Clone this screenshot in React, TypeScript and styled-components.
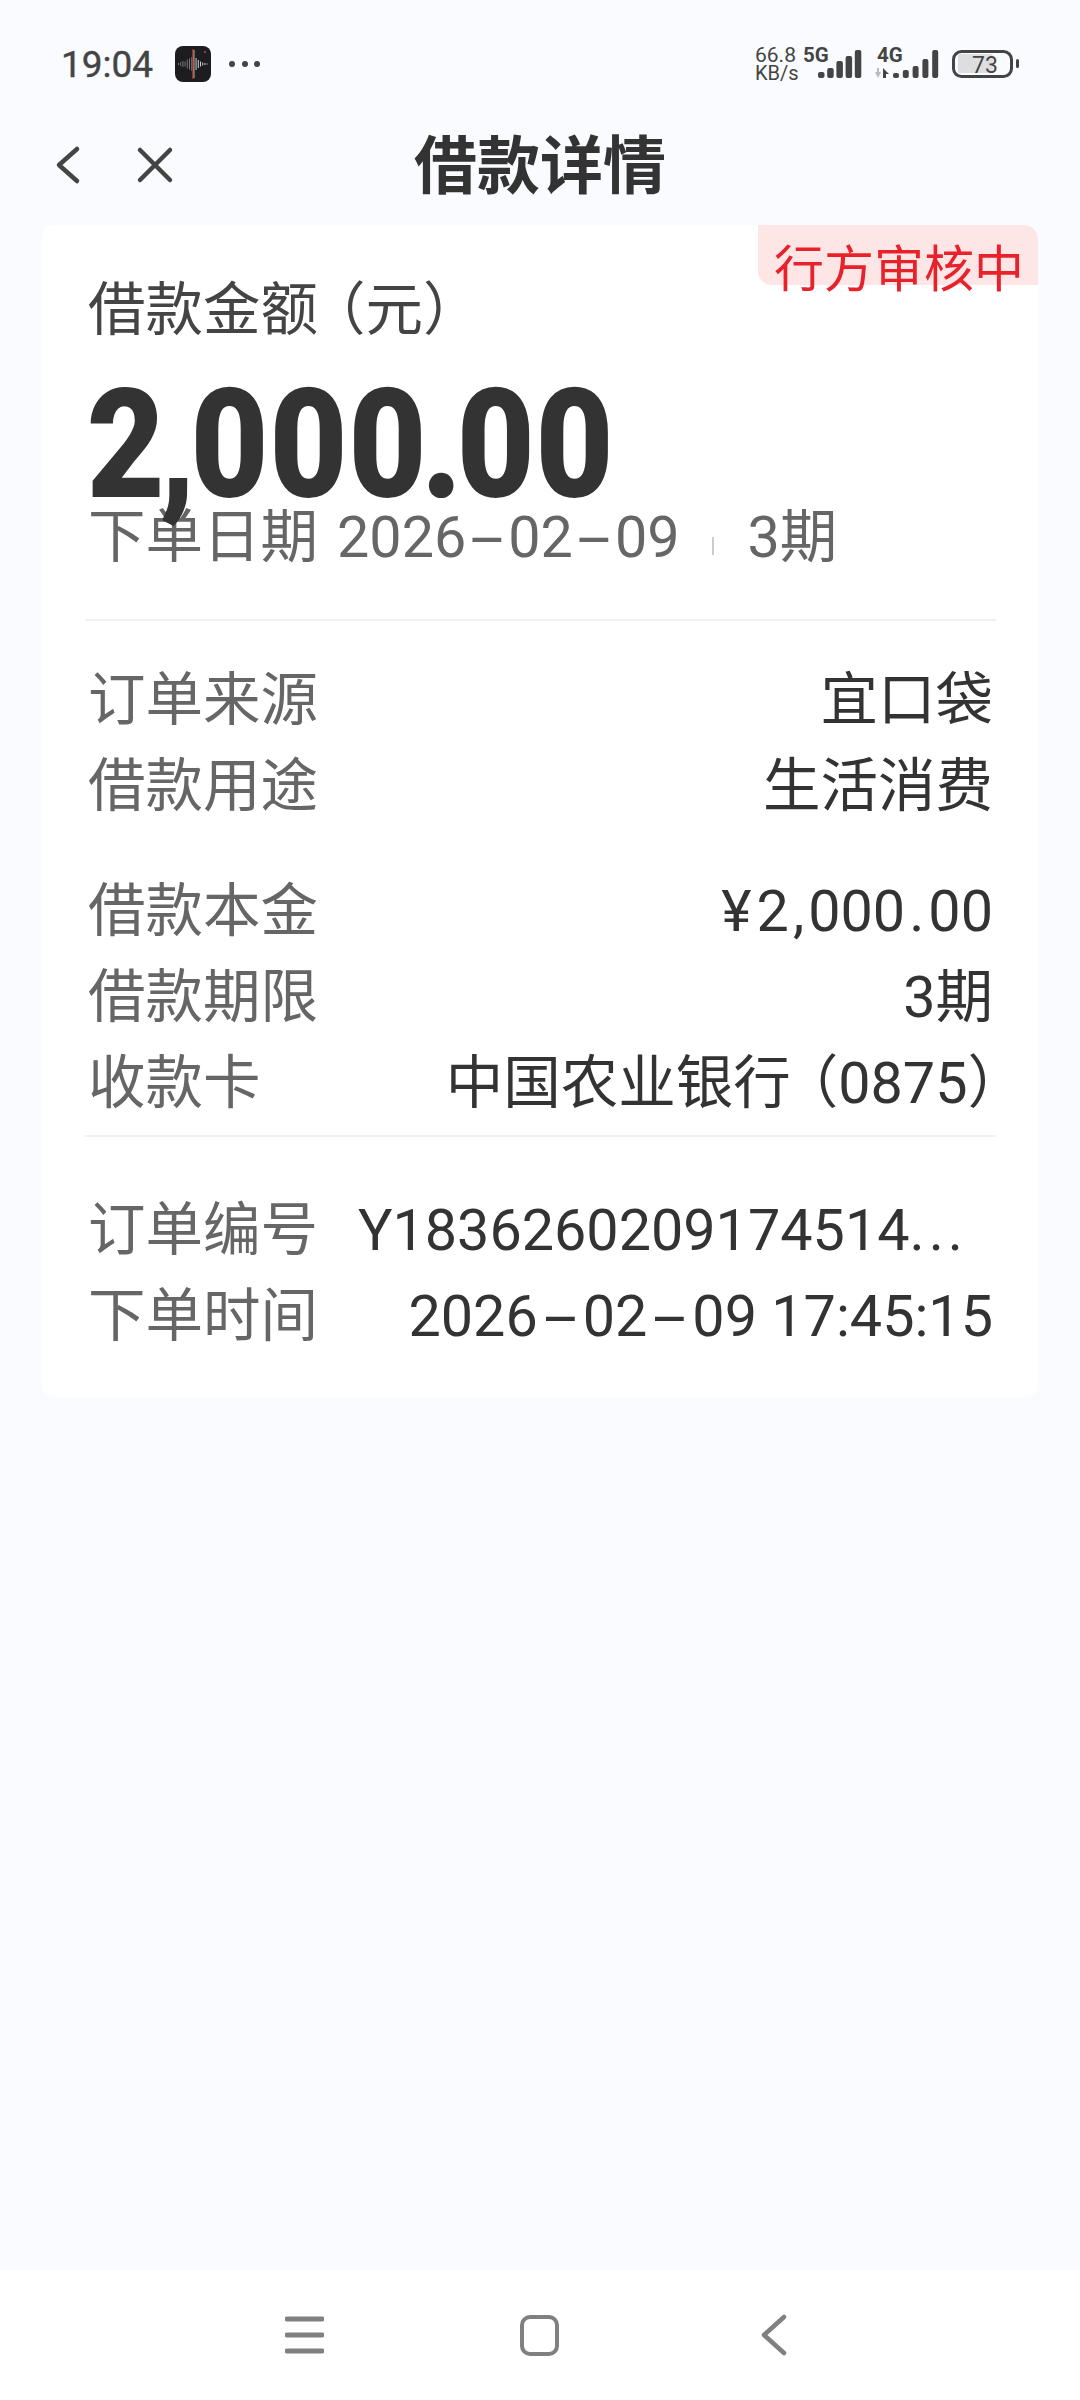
import styled, { createGlobalStyle } from "styled-components";

const GlobalStyle = createGlobalStyle`
  html, body {
    margin: 0;
    padding: 0;
    background: #fafbff;
  }
  * {
    box-sizing: border-box;
  }
`;

const FONT = `Roboto, "Noto Sans CJK SC", sans-serif`;

const Page = styled.div`
  width: 1080px;
  height: 2400px;
  display: flex;
  flex-direction: column;
  background: #fafbff;
  font-family: ${FONT};
  overflow: hidden;
`;

const StatusBar = styled.div`
  height: 124px;
  padding: 4px 62px 0 61px;
  display: flex;
  align-items: center;
  justify-content: space-between;
  color: #444;
`;

const StatusLeft = styled.div`
  display: flex;
  align-items: center;
`;

const Time = styled.span`
  width: 114px;
  font-size: 37px;
  font-weight: 400;
  -webkit-text-stroke: 0.4px #444;
`;

const AppIcon = styled.div`
  width: 36px;
  height: 36px;
  margin-right: 17px;
  svg {
    display: block;
  }
`;

const StatusRight = styled.div`
  width: 265px;
  margin: -4px -2px 0 0;
  svg {
    display: block;
  }
`;

const NavBar = styled.div`
  position: relative;
  height: 82px;
  display: flex;
  align-items: center;
  padding-left: 54px;
  gap: 54px;
`;

const NavTitle = styled.h1`
  position: absolute;
  top: 2px;
  left: 0;
  right: 0;
  margin: 0;
  text-align: center;
  font-size: 63px;
  line-height: 82px;
  font-weight: 700;
  color: #333;
`;

const Card = styled.section`
  position: relative;
  margin: 19px 42px 0;
  padding: 54px 42px 38px 43px;
  background: #fff;
  border-radius: 12px;
`;

const Badge = styled.div`
  position: absolute;
  top: 0;
  right: 0;
  width: 280px;
  height: 60px;
  padding-left: 16px;
  background: #ffe6e6;
  border-radius: 0 14px 0 14px;
  color: #e8222a;
  font-size: 50px;
  line-height: 91px;
  white-space: nowrap;
`;

const AmountLabel = styled.div`
  height: 60px;
  padding-left: 3px;
  font-size: 57.5px;
  line-height: 64px;
  color: #444;
  white-space: nowrap;
`;

const Amount = styled.div`
  margin-top: 41px;
  padding-left: 2px;
  height: 124px;
  font-size: 153px;
  line-height: 130px;
  font-weight: 900;
  color: #333;
  letter-spacing: 1px;
  white-space: nowrap;
  transform: scaleX(0.88);
  transform-origin: left center;
`;

const AmountMark = styled.span`
  margin: 0 -7px;
`;

const Sub = styled.div`
  display: flex;
  align-items: center;
  padding: 6px 0 0 3px;
  height: 62px;
  font-size: 57.5px;
  line-height: 62px;
  color: #666;
  white-space: nowrap;
`;

const SubDate = styled.span`
  margin-left: 19px;
`;

const SubBar = styled.i`
  width: 2px;
  height: 18px;
  margin: 16px 34px 0 32px;
  background: #ccc;
`;

const Hy = styled.span<{ $w?: number }>`
  display: inline-block;
  width: ${(p) => p.$w ?? 45}px;
  text-align: center;
  transform: scaleX(2.1);
`;

const Divider = styled.hr<{ $top: number; $bottom: number }>`
  margin: ${(p) => p.$top}px 0 ${(p) => p.$bottom}px;
  border: 0;
  height: 2px;
  background: #f1f1f3;
`;

const Group = styled.div<{ $top?: number }>`
  margin-top: ${(p) => p.$top ?? 0}px;
  padding: 0 3px;
`;

const Row = styled.div`
  display: flex;
  justify-content: space-between;
  height: 86px;
  line-height: 88px;
  font-size: 57.5px;
  white-space: nowrap;
`;

const Label = styled.span`
  color: #666;
  flex: none;
`;

const Value = styled.span`
  color: #333;
`;

const OrderNo = styled(Value)`
  margin-right: 26px;
`;

const Ellip = styled.span`
  letter-spacing: 4px;
`;

const Sep = styled.span`
  margin: 0 4px;
`;

const Yen = styled.span`
  margin-right: 5px;
`;

const Paren = styled.span<{ $end?: number }>`
  margin-left: -10px;
  margin-right: ${(p) => p.$end ?? 0}px;
`;

const BottomBar = styled.div`
  margin-top: auto;
  height: 130px;
  background: #fff;
  display: flex;
  align-items: center;
  padding-left: 285px;
`;

const BottomIcon = styled.svg<{ $gap: number }>`
  display: block;
  margin-right: ${(p) => p.$gap}px;
`;

function Back() {
  return (
    <svg width="28" height="40" viewBox="0 0 28 40" fill="none">
      <path d="M23 4 L5 20 L23 36" stroke="#444" strokeWidth="4.5" strokeLinecap="round" strokeLinejoin="round" />
    </svg>
  );
}

function Close() {
  return (
    <svg width="38" height="38" viewBox="0 0 38 38" fill="none">
      <path d="M4 4 L34 34 M34 4 L4 34" stroke="#444" strokeWidth="4.5" strokeLinecap="round" />
    </svg>
  );
}

function VoiceIcon() {
  const heights = [2, 4, 6, 5, 9, 11, 14, 28, 12, 8, 5, 3, 2, 1];
  return (
    <svg width="36" height="36" viewBox="0 0 36 36">
      <rect width="36" height="36" rx="8" fill="#1d1d1f" />
      {heights.map((h, i) => (
        <rect key={i} x={3 + i * 2.2} y={18 - h / 2} width="1" height={h} fill={i < 7 ? "#777" : "#ccc"} />
      ))}
      <rect x="17.4" y="3" width="1" height="30" fill="#c8452f" />
      <circle cx="30" cy="6" r="1" fill="#d0453a" />
    </svg>
  );
}

function Dots() {
  return (
    <svg width="34" height="8" viewBox="0 0 34 8">
      <circle cx="4" cy="4" r="3" fill="#444" />
      <circle cx="17" cy="4" r="3" fill="#444" />
      <circle cx="29" cy="4" r="3" fill="#444" />
    </svg>
  );
}

function StatusIcons() {
  const bars5 = [6, 10, 17, 22, 28];
  const bars4 = [5, 8, 12, 19, 28];
  return (
    <svg width="265" height="40" viewBox="0 0 265 40" fontFamily="Roboto, sans-serif" fill="#444">
      <text x="0" y="20" fontSize="21">66.8</text>
      <text x="0" y="38" fontSize="20">KB/s</text>
      <text x="48" y="20" fontSize="20.5" fontWeight="700">5G</text>
      {bars5.map((h, i) => (
        <rect key={i} x={63 + i * 9.2} y={36 - h} width="6.5" height={h} rx="2" />
      ))}
      <text x="122" y="20" fontSize="20.5" fontWeight="700">4G</text>
      <path d="M120 30 h2 v-4 h2 v4 h2 l-3 6 z" fill="#bbb" />
      <path d="M128 26 l6 6 h-3 v4 h-3 z" />
      {bars4.map((h, i) => (
        <rect key={i} x={138 + i * 9.8} y={36 - h} width="6" height={h} rx="2" />
      ))}
      <rect x="198.5" y="9.5" width="58" height="25" rx="8" fill="none" stroke="#444" strokeWidth="3" />
      <rect x="203" y="12" width="35" height="19" fill="#dedede" rx="2" />
      <text x="217" y="31" fontSize="23">73</text>
      <rect x="261" y="17" width="3" height="9" rx="1.5" />
    </svg>
  );
}

export default function App() {
  return (
    <Page>
      <GlobalStyle />
      <StatusBar>
        <StatusLeft>
          <Time>19:04</Time>
          <AppIcon>
            <VoiceIcon />
          </AppIcon>
          <Dots />
        </StatusLeft>
        <StatusRight>
          <StatusIcons />
        </StatusRight>
      </StatusBar>
      <NavBar>
        <NavTitle>借款详情</NavTitle>
        <Back />
        <Close />
      </NavBar>
      <Card>
        <Badge>行方审核中</Badge>
        <AmountLabel>
          借款金额<Paren>（元）</Paren>
        </AmountLabel>
        <Amount>
          2<AmountMark>,</AmountMark>000<AmountMark>.</AmountMark>00
        </Amount>
        <Sub>
          下单日期
          <SubDate>
            2026<Hy $w={42}>-</Hy>02<Hy $w={42}>-</Hy>09
          </SubDate>
          <SubBar />
          3期
        </Sub>
        <Divider $top={53} $bottom={36} />
        <Group>
          <Row>
            <Label>订单来源</Label>
            <Value>宜口袋</Value>
          </Row>
          <Row>
            <Label>借款用途</Label>
            <Value>生活消费</Value>
          </Row>
        </Group>
        <Group $top={39}>
          <Row>
            <Label>借款本金</Label>
            <Value>
              <Yen>¥</Yen>2<Sep>,</Sep>000<Sep>.</Sep>00
            </Value>
          </Row>
          <Row>
            <Label>借款期限</Label>
            <Value>3期</Value>
          </Row>
          <Row>
            <Label>收款卡</Label>
            <Value>
              中国农业银行<Paren $end={-32}>（0875）</Paren>
            </Value>
          </Row>
        </Group>
        <Divider $top={9} $bottom={50} />
        <Group>
          <Row>
            <Label>订单编号</Label>
            <OrderNo>
              Y1836260209174514<Ellip>...</Ellip>
            </OrderNo>
          </Row>
          <Row>
            <Label>下单时间</Label>
            <Value>
              2026<Hy>-</Hy>02<Hy>-</Hy>09 17:45:15
            </Value>
          </Row>
        </Group>
      </Card>
      <BottomBar>
        <BottomIcon $gap={196} width="39" height="38" viewBox="0 0 39 38" fill="none">
          <path d="M2 3 H37 M2 19 H37 M2 35 H37" stroke="#808080" strokeWidth="5" strokeLinecap="round" />
        </BottomIcon>
        <BottomIcon $gap={202} width="39" height="41" viewBox="0 0 39 41" fill="none">
          <rect x="2" y="2" width="35" height="37" rx="8" stroke="#808080" strokeWidth="4" />
        </BottomIcon>
        <BottomIcon $gap={0} width="26" height="42" viewBox="0 0 26 42" fill="none">
          <path d="M23 3 L3 21 L23 39" stroke="#808080" strokeWidth="4.5" strokeLinecap="round" strokeLinejoin="round" />
        </BottomIcon>
      </BottomBar>
    </Page>
  );
}
